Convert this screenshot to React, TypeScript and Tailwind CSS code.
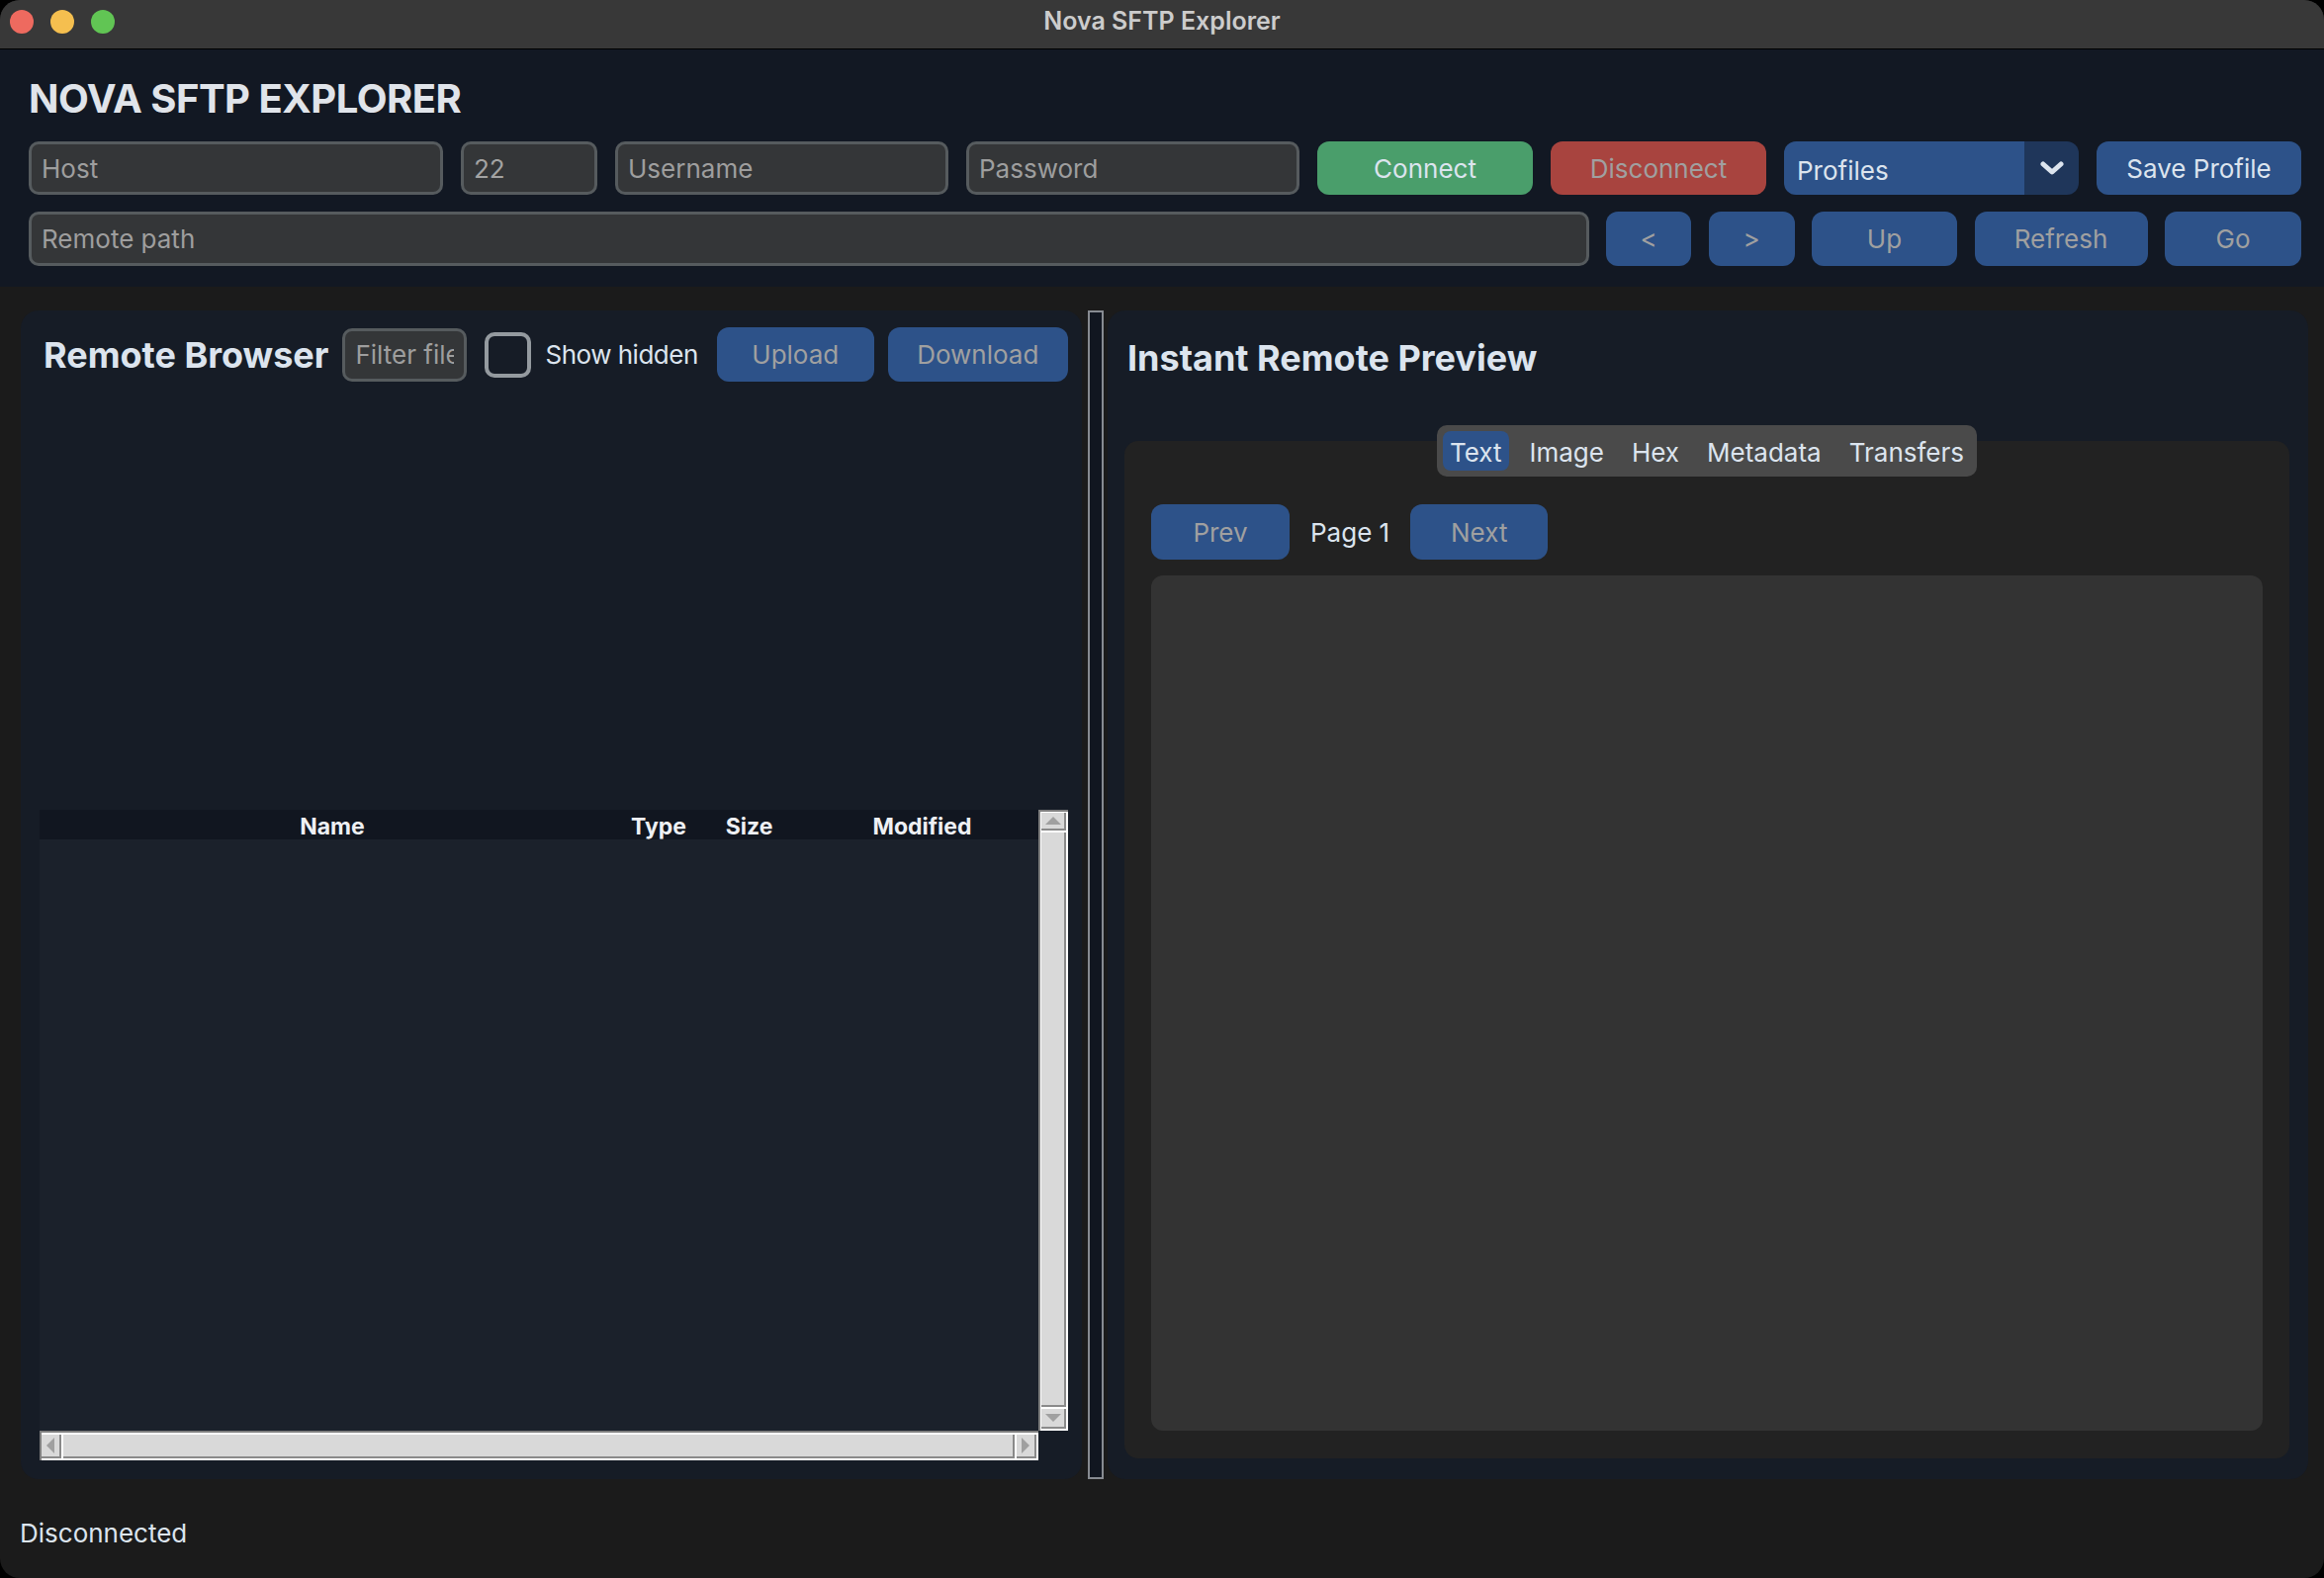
import React from 'react';

const TEXT = 'text-[#dce4ee]';

function Field({
  placeholder,
  value,
  className = '',
}: {
  placeholder?: string;
  value?: string;
  className?: string;
}) {
  return (
    <input
      readOnly
      defaultValue={value}
      placeholder={placeholder}
      className={`h-full min-w-0 rounded-[10px] border-[3px] border-[#565b5e] bg-[#343638] px-[10px] text-[26px] text-[#a3a3a3] placeholder:text-[#9e9e9e] outline-none ${className}`}
    />
  );
}

function Btn({
  children,
  className = '',
  tone = 'blue',
  disabled = false,
}: {
  children: React.ReactNode;
  className?: string;
  tone?: 'blue' | 'green' | 'red';
  disabled?: boolean;
}) {
  const bg =
    tone === 'green' ? 'bg-[#4a9e6b]' : tone === 'red' ? 'bg-[#a8443f]' : 'bg-[#2d5289]';
  return (
    <button
      className={`flex h-full items-center justify-center rounded-[12px] text-[26px] ${bg} ${
        disabled ? 'text-[#a0a0a0]' : TEXT
      } ${className}`}
    >
      {children}
    </button>
  );
}

function TitleBar() {
  return (
    <div className="grid h-[50px] shrink-0 grid-cols-[1fr_auto_1fr] border-b border-black bg-[#383838]">
      <div className="flex items-start gap-[17px] pl-[10px] pt-[10px]">
        <span className="h-[24px] w-[24px] rounded-full bg-[#ee6a5f]" />
        <span className="h-[24px] w-[24px] rounded-full bg-[#f5bf4f]" />
        <span className="h-[24px] w-[24px] rounded-full bg-[#61c554]" />
      </div>
      <div className="pt-[6px] text-[25px] font-semibold leading-[30px] text-[#cccccc]">
        Nova SFTP Explorer
      </div>
      <div />
    </div>
  );
}

function Header() {
  return (
    <header className="shrink-0 bg-[#121823] pb-[21px] pl-[29px] pr-[23px] pt-[26px]">
      <h1 className="text-[40px] font-bold leading-[48px] tracking-[-0.5px] text-[#e0e4ea]">
        NOVA SFTP EXPLORER
      </h1>
      <div className="mt-[19px] flex h-[54px] gap-[18px]">
        <Field placeholder="Host" className="flex-1" />
        <Field value="22" className="w-[138px]" />
        <Field placeholder="Username" className="w-[337px]" />
        <Field placeholder="Password" className="w-[337px]" />
        <Btn tone="green" className="w-[218px]">
          Connect
        </Btn>
        <Btn tone="red" disabled className="w-[218px]">
          Disconnect
        </Btn>
        <div className="flex w-[298px] overflow-hidden rounded-[12px]">
          <div className={`flex flex-1 items-center bg-[#2d5289] pl-[13px] pt-[4px] text-[26px] ${TEXT}`}>
            Profiles
          </div>
          <div className="flex w-[55px] items-center justify-center bg-[#1f365a]">
            <svg width="24" height="14" viewBox="0 0 24 14" fill="none">
              <polyline
                points="3,3 12,11 21,3"
                stroke="#dce4ee"
                strokeWidth="5"
                strokeLinecap="round"
                strokeLinejoin="round"
              />
            </svg>
          </div>
        </div>
        <Btn className="w-[207px]">Save Profile</Btn>
      </div>
      <div className="mt-[17px] flex h-[55px] gap-[17.5px]">
        <Field placeholder="Remote path" className="flex-1" />
        <Btn disabled className="w-[86px]">
          &lt;
        </Btn>
        <Btn disabled className="w-[87px]">
          &gt;
        </Btn>
        <Btn disabled className="w-[147px]">
          Up
        </Btn>
        <Btn disabled className="w-[175px]">
          Refresh
        </Btn>
        <Btn disabled className="w-[138px]">
          Go
        </Btn>
      </div>
    </header>
  );
}

// classic Tk scrollbar pieces
function Bevel({ className = '', children }: { className?: string; children?: React.ReactNode }) {
  return (
    <div
      className={`flex items-center justify-center border-b-2 border-r-2 border-[#8a8a8a] bg-[#d9d9d9] ${className}`}
    >
      {children}
    </div>
  );
}

function Arrow({ dir }: { dir: 'up' | 'down' | 'left' | 'right' }) {
  const pts = {
    up: '0,8 8,0 16,8',
    down: '0,0 16,0 8,8',
    left: '8,0 8,16 0,8',
    right: '0,0 8,8 0,16',
  }[dir];
  const vertical = dir === 'up' || dir === 'down';
  return (
    <svg width={vertical ? 16 : 8} height={vertical ? 8 : 16} viewBox={vertical ? '0 0 16 8' : '0 0 8 16'}>
      <polygon points={pts} fill="#a0a0a0" />
    </svg>
  );
}

function VScroll() {
  return (
    <div className="flex w-[30px] flex-col gap-[2px] border-l-2 border-t-2 border-[#7f7f7f] bg-white pb-[2px] pl-[1px] pr-[2px] pt-[1px]">
      <Bevel className="h-[18px]">
        <Arrow dir="up" />
      </Bevel>
      <Bevel className="flex-1" />
      <Bevel className="h-[20px]">
        <Arrow dir="down" />
      </Bevel>
    </div>
  );
}

function HScroll() {
  return (
    <div className="mr-[30px] flex h-[30px] gap-[2px] border-l-2 border-t-2 border-[#7f7f7f] bg-white p-[2px] pl-[0px]">
      <Bevel className="w-[20px]">
        <Arrow dir="left" />
      </Bevel>
      <Bevel className="flex-1" />
      <Bevel className="w-[20px]">
        <Arrow dir="right" />
      </Bevel>
    </div>
  );
}

function FileTable() {
  return (
    <div className="ml-[19px] mr-[14px] flex h-[658px] flex-col">
      <div className="flex min-h-0 flex-1">
        <div className="flex flex-1 flex-col bg-[#1b212b]">
          <div className="grid h-[30px] grid-cols-[592px_68px_115px_1fr] items-center bg-[#111620] text-[23px] font-bold text-[#eef0f4]">
            <div className="text-center">Name</div>
            <div className="text-center">Type</div>
            <div className="text-center">Size</div>
            <div className="text-center">Modified</div>
          </div>
          <div className="flex-1" />
        </div>
        <VScroll />
      </div>
      <HScroll />
    </div>
  );
}

function RemoteBrowser() {
  return (
    <section className="flex w-[1073px] flex-col rounded-[18px] bg-[#161c26] pb-[19px] pt-[17px]">
      <div className="flex h-[55px] items-center pl-[23px]">
        <h2 className="text-[36px] font-bold text-[#dce4ee]">Remote Browser</h2>
        <input
          readOnly
          placeholder="Filter files..."
          className="ml-[14px] h-[54px] w-[126px] rounded-[10px] border-[3px] border-[#565b5e] bg-[#343638] px-[10px] text-[26px] placeholder:text-[#9e9e9e] outline-none"
        />
        <label className="ml-[18px] flex items-center">
          <span className="h-[46px] w-[47px] rounded-[10px] border-[4px] border-[#949a9f]" />
          <span className={`ml-[14px] text-[26px] tracking-[-0.5px] ${TEXT}`}>Show hidden</span>
        </label>
        <div className="ml-[19px] flex h-[55px] gap-[14px]">
          <Btn disabled className="w-[159px]">
            Upload
          </Btn>
          <Btn disabled className="w-[182px]">
            Download
          </Btn>
        </div>
      </div>
      <div className="flex-1" />
      <FileTable />
    </section>
  );
}

function Preview() {
  const tabs = ['Text', 'Image', 'Hex', 'Metadata', 'Transfers'];
  return (
    <section className="ml-[4px] flex flex-1 flex-col rounded-[18px] bg-[#161c26] pb-[21px] pl-[17px] pr-[19px] pt-[28px]">
      <h2 className="ml-[3px] text-[36px] font-bold leading-[40px] text-[#dce4ee]">
        Instant Remote Preview
      </h2>
      <div className="relative z-10 -mb-[36px] mt-[48px] flex h-[52px] gap-[14px] self-center rounded-[10px] bg-[#4a4a4a] p-[6px]">
        {tabs.map((t, i) => (
          <div
            key={t}
            className={`flex items-center rounded-[8px] px-[7px] pt-[2px] text-[26px] ${TEXT} ${
              i === 0 ? 'bg-[#2d5289]' : ''
            }`}
          >
            {t}
          </div>
        ))}
      </div>
      <div className="flex flex-1 flex-col rounded-[14px] bg-[#222222] px-[27px] pb-[28px] pt-[64px]">
        <div className="flex h-[56px] items-center">
          <Btn disabled className="w-[140px]">
            Prev
          </Btn>
          <span className={`mx-[21px] text-[26px] ${TEXT}`}>Page 1</span>
          <Btn disabled className="w-[139px]">
            Next
          </Btn>
        </div>
        <div className="mt-[16px] flex-1 rounded-[12px] bg-[#333333]" />
      </div>
    </section>
  );
}

export default function App() {
  return (
    <div className="h-[1596px] w-[2350px] bg-black font-['Inter',sans-serif]">
      <div className="flex h-full flex-col overflow-hidden rounded-[20px] bg-[#1b1b1b]">
        <TitleBar />
        <Header />
        <main className="flex flex-1 flex-col">
          <div className="flex h-[1206px] pl-[21px] pr-[16px] pt-[24px]">
            <RemoteBrowser />
            <div className="ml-[6px] w-[16px] border-2 border-[#878b91] bg-[#111620]" />
            <Preview />
          </div>
          <div className={`pl-[20px] pt-[39px] text-[26px] leading-[32px] ${TEXT}`}>Disconnected</div>
        </main>
      </div>
    </div>
  );
}
